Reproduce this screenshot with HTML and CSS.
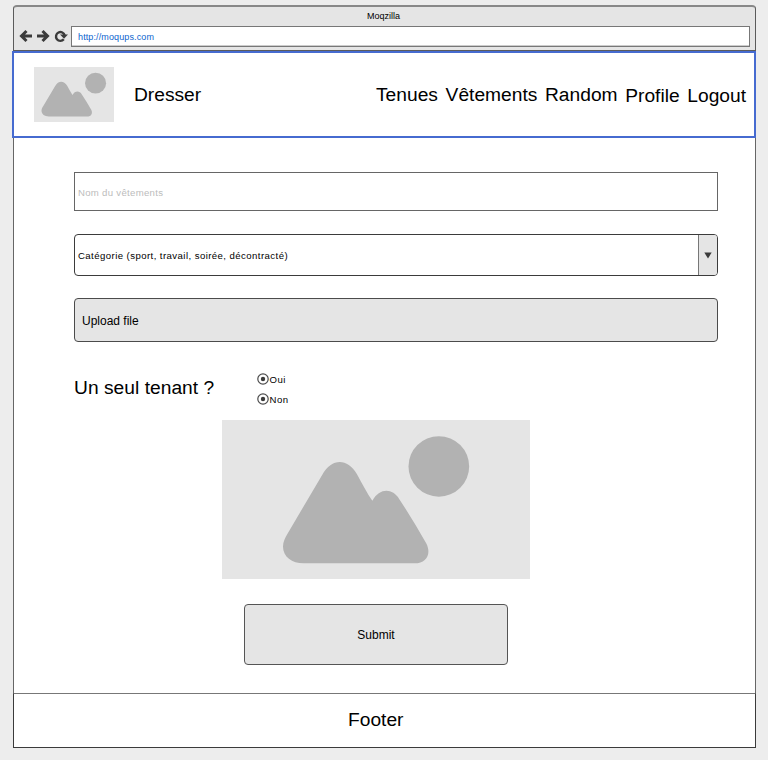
FILE: index.html
```html
<!DOCTYPE html>
<html lang="fr">
<head>
<meta charset="utf-8">
<title>Moqzilla</title>
<link rel="stylesheet" href="styles.css">
</head>
<body>
<svg class="defs" aria-hidden="true">
  <defs>
    <g id="scene">
      <path d="M203 410C203 395 209 383 217 370L320 195C350 143 395 143 425 192C440 220 455 248 471 272C492 234 530 232 552 267Q592 328 633 400C649 432 633 460 598 460H265C230 460 203 440 203 410Z"/>
      <circle cx="670.500" cy="168.500" r="91"/>
    </g>
  </defs>
</svg>
<div class="browser">
  <div class="chrome">
    <div class="title">Moqzilla</div>
    <div class="toolbar">
      <svg class="tools" width="50" height="14" viewBox="0 0 50 14">
        <path d="M14 7H4M8.500 2L3.500 7L8.500 12"/>
        <path d="M19 7H29M24.500 2L29.500 7L24.500 12"/>
        <path class="reload" d="M45.800 10.300A4.400 4.400 0 1 1 46.700 6.500"/>
        <path class="tip" d="M42 5.500H50L46 9.700Z"/>
      </svg>
      <div class="address">http://moqups.com</div>
    </div>
  </div>
  <header class="header">
    <svg class="logo" viewBox="138 27 692 481" preserveAspectRatio="none"><use href="#scene"/></svg>
    <div class="brand">Dresser</div>
    <nav class="nav">
      <span class="tenues">Tenues</span><span class="vetements">Vêtements</span><span class="random">Random</span><span class="profile">Profile</span><span class="logout">Logout</span>
    </nav>
  </header>
  <main class="main">
    <div class="field">Nom du vêtements</div>
    <div class="select"><span>Catégorie (sport, travail, soirée, décontracté)</span>
      <div class="arrow"><svg width="8" height="7" viewBox="0 0 8 7"><path d="M.3.500H7.700L4 6.500Z"/></svg></div>
    </div>
    <div class="upload">Upload file</div>
    <div class="question">
      <div class="label">Un seul tenant ?</div>
      <div class="radios">
        <div class="radio"><svg width="12" height="12" viewBox="0 0 12 12"><circle class="ring" cx="6" cy="6" r="5.200"/><circle cx="6" cy="6" r="2.200"/></svg><span>Oui</span></div>
        <div class="radio"><svg width="12" height="12" viewBox="0 0 12 12"><circle class="ring" cx="6" cy="6" r="5.200"/><circle cx="6" cy="6" r="2.200"/></svg><span>Non</span></div>
      </div>
    </div>
    <svg class="picture" viewBox="20 29 924 478" preserveAspectRatio="none"><use href="#scene"/></svg>
    <div class="submit">Submit</div>
  </main>
  <footer class="footer"><span>Footer</span></footer>
</div>
</body>
</html>
```
FILE: styles.css
```css
* { box-sizing: border-box; }
body {
  margin: 0;
  background: #ededed;
  color: #000;
  font-family: "Liberation Sans", Arial, sans-serif;
  font-size: 19.2px;
}
.defs { position: absolute; width: 0; height: 0; }
.browser { width: 744px; margin: 5px 0 0 12px; white-space: nowrap; }
.chrome {
  height: 46px;
  margin-left: 1px;
  border: 1px solid #5b5b5b;
  border-top: 2px solid #888;
  border-radius: 4px 4px 0 0;
  background: #e5e5e5;
}
.title {
  height: 19px;
  padding-top: 3px;
  font-size: 9px;
  line-height: 12px;
  letter-spacing: 0;
  text-align: center;
  padding-right: 2px;
}
.toolbar { display: flex; padding: 0 5px 0 4px; }
.tools { flex: none; margin-top: 3px; fill: none; stroke: #3b3b3b; stroke-width: 3; }
.tools .reload { stroke-width: 2.4; }
.tools .tip { fill: #3b3b3b; stroke: none; }
.address {
  flex: 1;
  height: 21px;
  margin-left: 3px;
  padding-left: 6px;
  border: 1px solid #777;
  background: #fff;
  box-shadow: inset 0 -1px #ccc;
  color: #0b63ce;
  font-size: 9px;
  line-height: 20px;
  letter-spacing: 0.12px;
}
.header {
  display: flex;
  height: 87px;
  border: 2px solid #466bd0;
  background: #fff;
  line-height: 22px;
}
.logo { width: 80px; height: 55px; margin: 14px 0 0 20px; background: #e5e5e5; fill: #b2b2b2; }
.brand { margin: 31px 0 0 20px; }
.nav { display: flex; margin: 31px 8px 0 auto; }
.nav span + span { margin-left: 7.7px; }
.nav .profile, .nav .logout { padding-top: 1px; }
.main {
  height: 555px;
  margin-left: 1px;
  padding: 35px 37px 0 60px;
  border: solid #666;
  border-width: 0 1px;
  background: #fff;
}
.field {
  height: 39px;
  margin-top: -1px;
  padding-left: 3px;
  border: 1px solid #666;
  color: #bcbcbc;
  font-size: 9.6px;
  line-height: 39px;
  letter-spacing: 0.3px;
}
.select {
  display: flex;
  justify-content: space-between;
  height: 42px;
  margin-top: 23px;
  padding-left: 3px;
  border: 1px solid #3b3b3b;
  border-radius: 4px;
  overflow: hidden;
  font-size: 9.6px;
  line-height: 41px;
  letter-spacing: 0.43px;
}
.arrow {
  display: flex;
  align-items: center;
  justify-content: center;
  width: 19px;
  border-left: 1px solid #777;
  background: #e5e5e5;
}
.arrow svg, .radio circle { fill: #3b3b3b; }
.upload {
  height: 44px;
  margin-top: 22px;
  padding-left: 7px;
  border: 1px solid #4b4b4b;
  border-radius: 4px;
  background: #e5e5e5;
  font-size: 12px;
  line-height: 44px;
}
.question { display: flex; height: 78px; }
.label { width: 182.5px; padding-top: 35px; line-height: 22px; letter-spacing: 0.03px; }
.radios { padding-top: 27px; font-size: 9.6px; letter-spacing: 0.45px; }
.radio { display: flex; align-items: center; gap: 1px; height: 20px; }
.radio .ring { fill: none; stroke: #4b4b4b; stroke-width: 1.2; }
.picture {
  display: block;
  width: 308px;
  height: 159px;
  margin-left: 147.500px;
  background: #e5e5e5;
  fill: #b2b2b2;
}
.submit {
  width: 264px;
  height: 61px;
  margin: 25px 0 0 170px;
  border: 1px solid #555;
  border-radius: 4px;
  background: #e5e5e5;
  font-size: 12px;
  line-height: 60px;
  text-align: center;
}
.footer {
  height: 55px;
  margin-left: 1px;
  padding-left: 334px;
  border: 1px solid #3b3b3b;
  border-top-color: #777;
  background: #fff;
  line-height: 52px;
}
```
